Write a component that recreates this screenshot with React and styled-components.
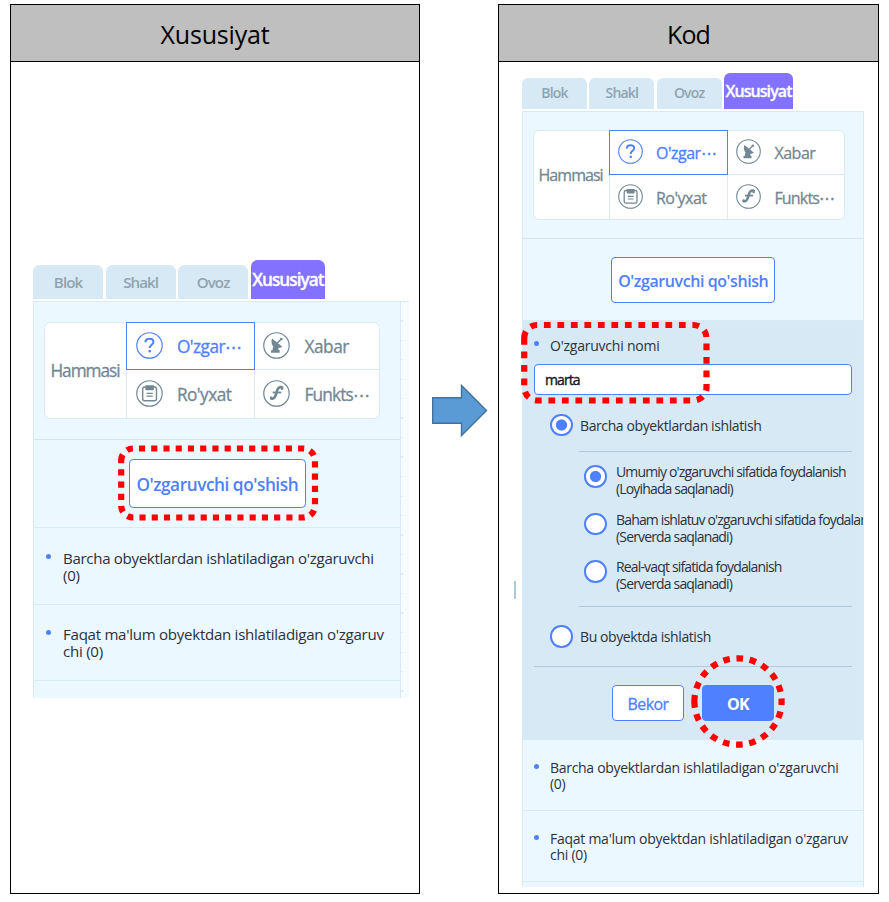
import React from 'react';
import styled, { createGlobalStyle, ThemeProvider, css } from 'styled-components';

const GlobalStyle = createGlobalStyle`
  * { box-sizing: border-box; }
  body { margin: 0; background: #fff; font-family: "Open Sans", "Noto Sans", sans-serif; }
`;

const c = {
  blue: '#4f80ff',
  violet: '#8272ff',
  tab: '#d7e9f5',
  panel: '#ebf8ff',
  line: '#d8eaf4',
  slate: '#728794',
  ink: '#2c313d',
  rule: '#aecadb',
};

/* Length in design units, scaled by the panel's zoom factor. */
const u = (n) => ({ theme }) => `${n * theme.scale}px`;

const Page = styled.main`
  position: relative;
  display: flex;
  width: 889px;
  height: 902px;
  padding: 4px 10px 8px;
  background: #fff;
`;

const Frame = styled.section`
  display: flex;
  flex-direction: column;
  width: ${(p) => p.$width}px;
  height: 890px;
  border: 1px solid #000;
`;

const FrameTitle = styled.h2`
  display: flex;
  align-items: center;
  justify-content: center;
  height: 57px;
  margin: 0;
  padding-top: 2px;
  border-bottom: 1px solid #000;
  background: #bfbfbf;
  color: #000;
  font: 400 25px/34px "Open Sans", sans-serif;
  letter-spacing: ${(p) => p.$spacing}px;
`;

const Gap = styled.div`
  display: flex;
  justify-content: center;
  width: 78px;
  padding: 378px 0 0 2px;
`;

const Workspace = styled.div`
  display: flex;
  flex-direction: column;
  width: ${(p) => p.$width}px;
  height: ${(p) => p.$height}px;
  margin: ${(p) => p.$top}px 0 0 ${(p) => p.$left}px;
`;

const Tabs = styled.nav`
  display: flex;
  align-items: flex-end;
  gap: ${u(2.3)};
  height: ${u(36)};
  margin-bottom: ${u(2.5)};
`;

const Tab = styled.button`
  display: flex;
  align-items: center;
  justify-content: center;
  width: ${u(65)};
  height: ${u(31)};
  padding: 0 0 ${u(1)};
  border: 0;
  border-radius: ${u(6)} ${u(6)} 0 0;
  background: ${c.tab};
  color: #8fa4b0;
  font: 600 ${u(14)} "Open Sans", sans-serif;
  letter-spacing: ${u(-0.85)};
  ${(p) => p.$active && css`
    width: ${u(69.2)};
    height: ${u(36)};
    padding: 0;
    background: ${c.violet};
    color: #fff;
    font-size: ${u(16)};
    letter-spacing: ${u(-0.93)};
    white-space: nowrap;
    -webkit-text-stroke: 0.3px currentColor;
  `}
`;

const Board = styled.div`
  display: flex;
  flex: 1;
  min-height: 0;
`;

const Panel = styled.div`
  display: flex;
  flex-direction: column;
  width: ${(p) => p.$width}px;
  border: 1px solid ${c.line};
  border-width: 1px 1px 0;
  background: ${c.panel};
  overflow: hidden;
`;

const CanvasEdge = styled.div`
  width: 8px;
  border-top: 1px solid ${c.line};
  background: repeating-linear-gradient(#f5fbff 0 18px, #dfeaf2 18px 19.5px) 0 0 / 2px 100% no-repeat #f5fbff;
`;

const Section = styled.div`
  display: flex;
  flex: none;
  justify-content: center;
  align-items: center;
  height: ${(p) => u(p.$height)};
  padding-right: ${u(9)};
  border-bottom: 1px solid ${(p) => p.$line || c.line};
`;

const Categories = styled.div`
  display: grid;
  grid-template-columns: ${u(75.2)} ${u(118.4)} 1fr;
  grid-template-rows: 1fr 1fr;
  width: ${u(312)};
  height: ${u(90)};
  margin-bottom: 1px;
  border: 1px solid ${c.line};
  border-radius: ${u(6)};
  background: #fff;
`;

const AllCell = styled.div`
  grid-row: span 2;
  display: flex;
  align-items: center;
  justify-content: center;
  padding: ${u(1)} ${u(1)} 0 0;
  color: ${c.slate};
  font-size: ${u(16)};
  letter-spacing: ${u(-0.95)};
  -webkit-text-stroke: 0.3px currentColor;
`;

const Category = styled.div`
  display: flex;
  align-items: center;
  padding-left: ${u(8)};
  padding-bottom: ${u(1)};
  border-left: 1px solid ${c.line};
  border-bottom: ${(p) => (p.$top ? `1px solid ${c.line}` : '0')};
  color: ${c.slate};
  font-size: ${u(16)};
  letter-spacing: ${(p) => u(p.$spacing)};
  white-space: nowrap;
  ${(p) => p.$active && css`
    margin: -1px -1px 0 0;
    border: 1px solid ${c.blue};
    color: ${c.blue};
    z-index: 1;
  `}
  svg { flex: none; width: ${u(25)}; height: ${u(25)}; margin-right: ${u(13.3)}; }
  span { padding-top: ${u(3)}; -webkit-text-stroke: 0.3px currentColor; }
`;

const AddButton = styled.button`
  width: ${u(164)};
  height: ${u(45.4)};
  margin-top: ${u(0.5)};
  margin-left: ${u(9.5)};
  padding: ${u(2)} 0 0;
  border: 1px solid ${c.blue};
  border-radius: ${u(4)};
  background: #fff;
  color: ${c.blue};
  font: 600 ${u(16)} "Open Sans", sans-serif;
  letter-spacing: ${u(-0.42)};
  white-space: nowrap;
`;

const Group = styled.div`
  flex: none;
  display: flex;
  height: ${u(70.7)};
  padding: ${u(20)} 0 0 ${u(11)};
  border-bottom: 1px solid ${c.line};
  color: ${c.ink};
  font-size: ${u(14)};
  line-height: ${u(16)};
  letter-spacing: ${(p) => u(p.$spacing)};
  white-space: nowrap;
`;

const Bullet = styled.i`
  flex: none;
  width: ${u(5)};
  height: ${u(5)};
  margin: ${u(3.5)} ${u(11)} 0 0;
  border-radius: 50%;
  background: ${c.blue};
`;

const Form = styled.form`
  flex: none;
  display: flex;
  flex-direction: column;
  height: 419.5px;
  margin: 0 -1px;
  padding-left: 12px;
  background: ${c.tab};
  color: ${c.ink};
  font-size: 14px;
`;

const FieldLabel = styled.label`
  display: flex;
  height: 43px;
  padding-top: 16.5px;
  line-height: 18px;
  letter-spacing: -0.23px;
`;

const NameInput = styled.input`
  flex: none;
  width: 318px;
  height: 31px;
  padding: 0 10px;
  border: 1px solid ${c.blue};
  border-radius: 4px;
  outline: 0;
  color: #17191f;
  font: 400 14px "Open Sans", sans-serif;
  letter-spacing: -0.9px;
  -webkit-text-stroke: 0.4px currentColor;
`;

const Option = styled.div`
  flex: none;
  display: flex;
  height: ${(p) => p.$height}px;
  margin-top: ${(p) => p.$before || 0}px;
  padding-left: ${(p) => (p.$nested ? 50 : 16)}px;
  letter-spacing: ${(p) => (p.$nested ? -0.84 : -0.4)}px;
  line-height: ${(p) => (p.$nested ? 17 : 22)}px;
  white-space: nowrap;
  p { margin: ${(p) => (p.$nested ? '-2px 0 0 9.5px' : '1px 0 0 7.5px')}; }
`;

const Radio = styled.span`
  flex: none;
  width: 22.5px;
  height: 22.5px;
  border: 2px solid ${c.blue};
  border-radius: 50%;
  background: ${(p) => (p.$on ? `radial-gradient(circle, ${c.blue} 5.2px, #fff 6px)` : '#fff')};
`;

const Rule = styled.hr`
  flex: none;
  width: ${(p) => p.$width}px;
  height: 1px;
  margin: 0 0 ${(p) => p.$after}px ${(p) => 318 - p.$width}px;
  border: 0;
  background: ${c.rule};
`;

const Actions = styled.div`
  display: flex;
  gap: 18px;
  padding-left: 78px;
`;

const ActionButton = styled.button`
  width: 72px;
  height: 36px;
  padding: 1px 0 0;
  border: 1px solid ${c.blue};
  border-radius: 4px;
  background: ${(p) => (p.$primary ? c.blue : '#fff')};
  color: ${(p) => (p.$primary ? '#fff' : c.blue)};
  font: ${(p) => (p.$primary ? 700 : 400)} 16px "Open Sans", sans-serif;
  letter-spacing: -0.6px;
  -webkit-text-stroke: ${(p) => (p.$primary ? 0 : 0.3)}px currentColor;
`;

const Handle = styled.div`
  position: absolute;
  left: 514px;
  top: 581px;
  width: 2px;
  height: 18px;
  background: #adc8d9;
`;

const Marks = styled.svg`
  position: absolute;
  inset: 0;
  pointer-events: none;
`;

const Ring = ({ children }) => (
  <svg viewBox="0 0 25 25" fill="none">
    <circle cx="12.5" cy="12.5" r="11.8" stroke="currentColor" strokeWidth="1.1" />
    {children}
  </svg>
);

const QuestionIcon = () => (
  <Ring>
    <path d="M8.700 9.600C8.800 7.300 10.300 6.200 12.500 6.200c2.200 0 3.700 1.200 3.700 3 0 2.600-3.500 2.700-3.500 5.700" stroke="currentColor" strokeWidth="1.900" />
    <rect x="11.600" y="16.700" width="2.200" height="2.200" fill="currentColor" />
  </Ring>
);

const ListIcon = () => (
  <Ring>
    <rect x="6.200" y="6.500" width="12.800" height="12.700" rx="1.800" stroke="currentColor" strokeWidth="1.300" />
    <path d="M8.700 4.900h7.900v3.700a.8.8 0 0 1-.8.8h-6.300a.8.8 0 0 1-.8-.8z" fill="currentColor" />
    <path d="M9.800 12.400h5.800M9.800 15h5.800" stroke="currentColor" strokeWidth="1.100" />
  </Ring>
);

const DishIcon = () => (
  <Ring>
    <path d="M8.400 6c-1.200 3.200-.4 6.200 1.600 7.700 2.200 1.600 5.400 1.700 8 .1z" fill="currentColor" />
    <path d="M12.500 11l4.200-4.200" stroke="currentColor" strokeWidth="1.300" />
    <circle cx="17" cy="6.600" r="1.200" fill="currentColor" />
    <path d="M9.500 13l4.800 2 .3 1.900h.9v2.300H7.500v-2.300h1.200z" fill="currentColor" />
  </Ring>
);

const FunctionIcon = () => (
  <Ring>
    <path d="M18.300 7.300c-.8-1.300-3.600-1.100-4.700 1.300-1.300 2.800-1.500 5.500-2.700 7.300-.9 1.500-2.800 1.800-3.900 1" stroke="currentColor" strokeWidth="2.500" />
    <path d="M9 11.600h8" stroke="currentColor" strokeWidth="1.700" />
    <circle cx="17.600" cy="8" r="1.300" fill="currentColor" />
    <circle cx="7.600" cy="16.500" r="1.300" fill="currentColor" />
  </Ring>
);

const CategoryPicker = () => (
  <Section $height={127.3} $line="#d5e3f1">
    <Categories>
      <AllCell>Hammasi</AllCell>
      <Category $top $active $spacing={-0.5}><QuestionIcon /><span>O'zgar⋯</span></Category>
      <Category $top $spacing={-0.46}><DishIcon /><span>Xabar</span></Category>
      <Category $spacing={-0.5}><ListIcon /><span>Ro'yxat</span></Category>
      <Category $spacing={-0.8}><FunctionIcon /><span>Funkts⋯</span></Category>
    </Categories>
  </Section>
);

const TabBar = () => (
  <Tabs>
    <Tab>Blok</Tab>
    <Tab>Shakl</Tab>
    <Tab>Ovoz</Tab>
    <Tab $active>Xususiyat</Tab>
  </Tabs>
);

const VariableGroups = () => (
  <>
    <Group $spacing={-0.3}>
      <Bullet />
      <div>Barcha obyektlardan ishlatiladigan o'zgaruvchi<br />(0)</div>
    </Group>
    <Group $spacing={-0.26}>
      <Bullet />
      <div>Faqat ma'lum obyektdan ishlatiladigan o'zgaruv<br />chi (0)</div>
    </Group>
  </>
);

const VariableForm = () => (
  <Form>
    <FieldLabel><Bullet />O'zgaruvchi nomi</FieldLabel>
    <NameInput defaultValue="marta" />
    <Option $before={19} $height={37.500}>
      <Radio $on /><p>Barcha obyektlardan ishlatish</p>
    </Option>
    <Rule $width={273} $after={13} />
    <Option $nested $height={47.500}>
      <Radio $on /><p>Umumiy o'zgaruvchi sifatida foydalanish<br />(Loyihada saqlanadi)</p>
    </Option>
    <Option $nested $height={47.500}>
      <Radio /><p>Baham ishlatuv o'zgaruvchi sifatida foydalanish<br />(Serverda saqlanadi)</p>
    </Option>
    <Option $nested $height={46}>
      <Radio /><p>Real-vaqt sifatida foydalanish<br />(Serverda saqlanadi)</p>
    </Option>
    <Rule $width={273} $after={18} />
    <Option $height={41}>
      <Radio /><p>Bu obyektda ishlatish</p>
    </Option>
    <Rule $width={318} $after={18} />
    <Actions>
      <ActionButton type="button">Bekor</ActionButton>
      <ActionButton type="button" $primary>OK</ActionButton>
    </Actions>
  </Form>
);

export default function App() {
  return (
    <Page>
      <GlobalStyle />
      <Frame $width={410}>
        <FrameTitle $spacing={-0.2}>Xususiyat</FrameTitle>
        <ThemeProvider theme={{ scale: 1.078 }}>
          <Workspace $width={376} $height={438} $top={198} $left={22}>
            <TabBar />
            <Board>
              <Panel $width={368.500}>
                <CategoryPicker />
                <Section $height={82.200}><AddButton>O'zgaruvchi qo'shish</AddButton></Section>
                <VariableGroups />
              </Panel>
              <CanvasEdge />
            </Board>
          </Workspace>
        </ThemeProvider>
      </Frame>
      <Gap>
        <svg width="60" height="58" viewBox="430 382 60 58">
          <path d="M432.700 397.700H461.500V385.500L486.500 410.500L461.500 435.500V423.200H432.700Z" fill="#5b9bd5" stroke="#41719c" strokeWidth="1.400" />
        </svg>
      </Gap>
      <Frame $width={381}>
        <FrameTitle $spacing={-0.9}>Kod</FrameTitle>
        <ThemeProvider theme={{ scale: 1 }}>
          <Workspace $width={342} $height={814.500} $top={10.500} $left={23}>
            <TabBar />
            <Board>
              <Panel $width={342}>
                <CategoryPicker />
                <Section $height={81.700}><AddButton>O'zgaruvchi qo'shish</AddButton></Section>
                <VariableForm />
                <VariableGroups />
              </Panel>
            </Board>
          </Workspace>
        </ThemeProvider>
      </Frame>
      <Handle />
      <Marks width="889" height="902" fill="none" stroke="#fe0000" strokeWidth="6.200">
        <path strokeDasharray="6.120 6.120" d="M121.200 460.500a12 12 0 0 1 12-12H303a12 12 0 0 1 12 12V505.500a12 12 0 0 1-12 12H133.200a12 12 0 0 1-12-12Z" />
        <path strokeDasharray="6.750 6.750" d="M524.200 338a13 13 0 0 1 13-13H693.500a13 13 0 0 1 13 13V387.500a13 13 0 0 1-13 13H537.200a13 13 0 0 1-13-13Z" />
        <path strokeDasharray="6.650 6.650" d="M694.400 701.500a43.600 43.200 0 0 1 87.200 0a43.600 43.200 0 0 1-87.200 0Z" />
      </Marks>
    </Page>
  );
}
